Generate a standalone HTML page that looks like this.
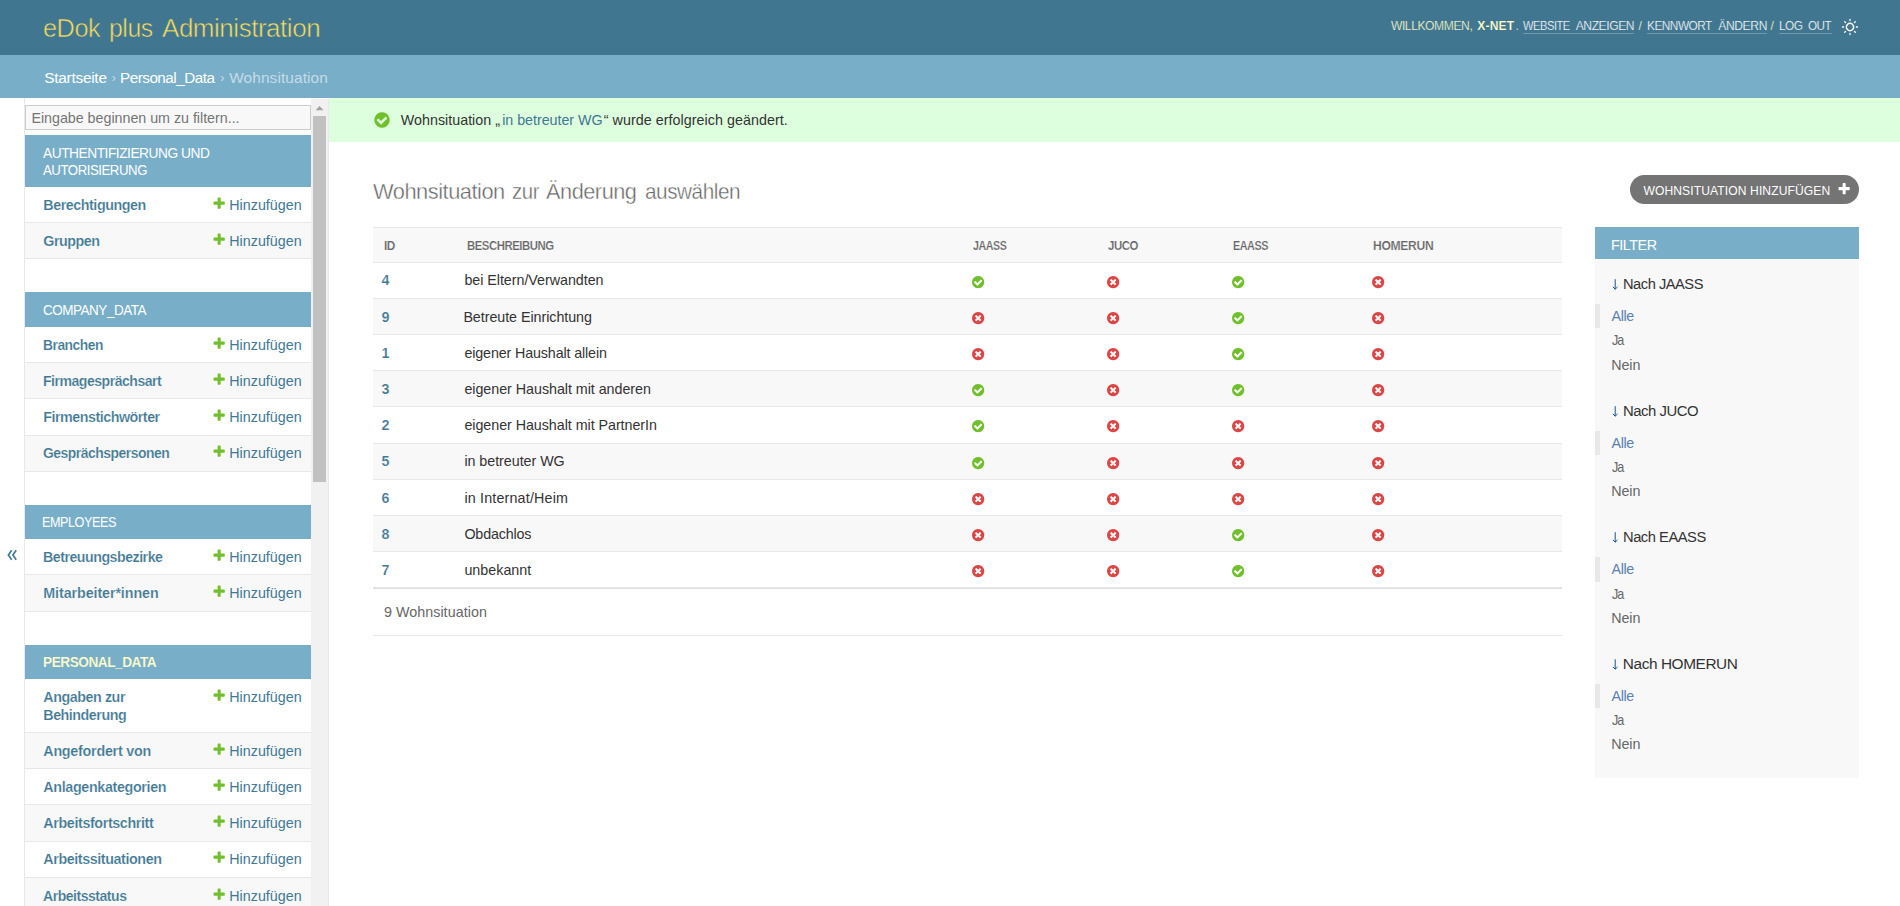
<!DOCTYPE html>
<html lang="de">
<head>
<meta charset="utf-8">
<title>Wohnsituation zur Änderung auswählen | eDok plus Administration</title>
<style>
html,body{margin:0;padding:0;background:#fff;}
body{width:1900px;height:906px;overflow:hidden;font-family:"Liberation Sans",sans-serif;}
#wrap{position:relative;width:1900px;height:906px;overflow:hidden;background:#fff;}
.r{position:absolute;}
.i{position:absolute;display:block;overflow:visible;}
.t{position:absolute;white-space:nowrap;line-height:0;transform-origin:0 50%;font-family:"Liberation Sans",sans-serif;}
.t::before{content:"";display:inline-block;width:0;height:30px;}
.title{-webkit-text-stroke:0.55px #417690;}
.h1{-webkit-text-stroke:0.4px #fff;}
.ul{-webkit-text-stroke:0.22px #417690;}
</style>
</head>
<body>
<svg width="0" height="0" style="position:absolute">
<symbol id="pg" viewBox="0 0 1792 1792"><path fill="#70bf2b" d="M1600 796v192q0 40-28 68t-68 28h-416v416q0 40-28 68t-68 28h-192q-40 0-68-28t-28-68v-416h-416q-40 0-68-28t-28-68v-192q0-40 28-68t68-28h416v-416q0-40 28-68t68-28h192q40 0 68 28t28 68v416h416q40 0 68 28t28 68z"/></symbol>
<symbol id="pw" viewBox="0 0 1792 1792"><path fill="#fff" d="M1600 736v192q0 40-28 68t-68 28h-416v416q0 40-28 68t-68 28h-192q-40 0-68-28t-28-68v-416h-416q-40 0-68-28t-28-68v-192q0-40 28-68t68-28h416v-416q0-40 28-68t68-28h192q40 0 68 28t28 68v416h416q40 0 68 28t28 68z"/></symbol>
<symbol id="yes" viewBox="0 0 1792 1792"><path fill="#70bf2b" d="M1412 734q0-28-18-46l-91-90q-19-19-45-19t-45 19l-408 407-226-226q-19-19-45-19t-45 19l-91 90q-18 18-18 46 0 27 18 45l362 362q19 19 45 19 27 0 46-19l543-543q18-18 18-45zm252 162q0 209-103 385.500t-279.500 279.500-385.500 103-385.500-103-279.500-279.500-103-385.500 103-385.500 279.500-279.500 385.500-103 385.500 103 279.500 279.500 103 385.500z"/></symbol>
<symbol id="no" viewBox="0 0 1792 1792"><path fill="#dd4646" d="M1277 1122q0-26-19-45l-181-181 181-181q19-19 19-45 0-27-19-46l-90-90q-19-19-46-19-26 0-45 19l-181 181-181-181q-19-19-45-19-27 0-46 19l-90 90q-19 19-19 46 0 26 19 45l181 181-181 181q-19 19-19 45 0 27 19 46l90 90q19 19 46 19 26 0 45-19l181-181 181 181q19 19 45 19 27 0 46-19l90-90q19-19 19-46zm387-226q0 209-103 385.500t-279.500 279.500-385.500 103-385.500-103-279.500-279.500-103-385.500 103-385.500 279.500-279.500 385.500-103 385.500 103 279.500 279.500 103 385.500z"/></symbol>
</svg>
<div id="wrap">
<div class="r" style="left:0px;top:0px;width:1900px;height:55px;background:#417690;"></div>
<div class="t title" style="left:43.35px;top:7px;font-size:26.70px;color:#f5dd5d;letter-spacing:-0.500px;transform:scaleX(0.9478);">eDok</div>
<div class="t title" style="left:109.07px;top:7px;font-size:26.70px;color:#f5dd5d;letter-spacing:-0.500px;transform:scaleX(0.9303);">plus</div>
<div class="t title" style="left:162.20px;top:7px;font-size:26.70px;color:#f5dd5d;letter-spacing:-0.500px;transform:scaleX(0.9756);">Administration</div>
<div class="t ul" style="left:1390.90px;top:0px;font-size:12.10px;color:#ffc;letter-spacing:-0.415px;">WILLKOMMEN,</div>
<div class="t" style="left:1477.20px;top:0px;font-size:12.10px;color:#ffc;letter-spacing:0.177px;font-weight:bold;-webkit-text-stroke:0.18px #417690;">X-NET</div>
<div class="t ul" style="left:1515.60px;top:0px;font-size:12.10px;color:#ffc;">.</div>
<div class="t ul" style="left:1523.00px;top:0px;font-size:12.10px;color:#fff;letter-spacing:-0.500px;transform:scaleX(0.9190);">WEBSITE</div>
<div class="t ul" style="left:1575.70px;top:0px;font-size:12.10px;color:#fff;letter-spacing:-0.427px;">ANZEIGEN</div>
<div class="t ul" style="left:1638.50px;top:0px;font-size:12.10px;color:#ffc;">/</div>
<div class="t ul" style="left:1647.10px;top:0px;font-size:12.10px;color:#fff;letter-spacing:-0.500px;transform:scaleX(0.9772);">KENNWORT</div>
<div class="t ul" style="left:1718.20px;top:0px;font-size:12.10px;color:#fff;letter-spacing:-0.367px;">ÄNDERN</div>
<div class="t ul" style="left:1770.50px;top:0px;font-size:12.10px;color:#ffc;">/</div>
<div class="t ul" style="left:1779.10px;top:0px;font-size:12.10px;color:#fff;letter-spacing:-0.500px;transform:scaleX(0.9779);">LOG</div>
<div class="t ul" style="left:1807.50px;top:0px;font-size:12.10px;color:#fff;letter-spacing:-0.500px;transform:scaleX(0.9666);">OUT</div>
<div class="r" style="left:1523px;top:33px;width:111px;height:1px;background:rgba(255,255,255,0.25);"></div>
<div class="r" style="left:1647px;top:33px;width:120px;height:1px;background:rgba(255,255,255,0.25);"></div>
<div class="r" style="left:1779px;top:33px;width:53px;height:1px;background:rgba(255,255,255,0.25);"></div>
<svg class="i" style="left:1840.8px;top:17.5px" width="18" height="18" viewBox="-9 -9 18 18" fill="none" stroke="#fff" stroke-width="1.5" stroke-linecap="round"><circle cx="0" cy="0" r="3.65"/><path stroke-width="1.3" d="M0 -6.4v-1.1M0 6.4v1.1M-6.4 0h-1.1M6.4 0h1.1M4.5 -4.5l.8 -.8M-4.5 -4.5l-.8 -.8M4.5 4.5l.8 .8M-4.5 4.5l-.8 .8"/></svg>
<div class="r" style="left:0px;top:55px;width:1900px;height:43px;background:#79aec8;"></div>
<div class="t" style="left:44.20px;top:53px;font-size:15.40px;color:#fff;letter-spacing:-0.250px;">Startseite</div>
<div class="t" style="left:111.70px;top:52px;font-size:12.32px;color:#c4dce8;">›</div>
<div class="t" style="left:119.91px;top:53px;font-size:15.40px;color:#fff;letter-spacing:-0.500px;transform:scaleX(0.9910);">Personal_Data</div>
<div class="t" style="left:220.30px;top:52px;font-size:12.32px;color:#c4dce8;">›</div>
<div class="t" style="left:229.20px;top:53px;font-size:15.40px;color:#c4dce8;letter-spacing:0.117px;">Wohnsituation</div>
<div class="r" style="left:24px;top:98px;width:1px;height:808px;background:#e8e8e8;"></div>
<svg class="i" style="left:6px;top:548px" width="13" height="14" viewBox="6 548 13 14" fill="none" stroke="#417893" stroke-width="1.7"><path d="M11.7 550.2L8.4 555l3.3 4.8M16.2 550.2L12.9 555l3.3 4.8"/></svg>
<div class="r" style="left:311px;top:99px;width:17px;height:807px;background:#f1f1f1;"></div>
<div class="r" style="left:328px;top:99px;width:1px;height:807px;background:#e8e8e8;"></div>
<div class="r" style="left:313px;top:116px;width:13px;height:366px;background:#c1c1c1;"></div>
<svg class="i" style="left:315px;top:105px" width="9" height="6" viewBox="0 0 9 6"><path d="M0.5 5.3L4.5 1l4 4.3z" fill="#a3a3a3"/></svg>
<div class="r" style="left:25px;top:105px;width:286px;height:25px;background:#f8f8f8;box-sizing:border-box;border:1px solid #ccc;"></div>
<div class="t" style="left:31.40px;top:93px;font-size:14.30px;color:#757575;letter-spacing:-0.027px;">Eingabe beginnen um zu filtern...</div>
<div class="r" style="left:25px;top:135px;width:286px;height:52px;background:#79aec8;"></div>
<div class="t" style="left:43.20px;top:128px;font-size:14.30px;color:#fff;letter-spacing:-0.500px;transform:scaleX(0.9616);">AUTHENTIFIZIERUNG UND</div>
<div class="t" style="left:43.20px;top:145px;font-size:14.30px;color:#fff;letter-spacing:-0.500px;transform:scaleX(0.9249);">AUTORISIERUNG</div>
<div class="r" style="left:25px;top:187px;width:286px;height:35px;background:#fff;"></div>
<div class="r" style="left:25px;top:222px;width:286px;height:1px;background:#e8e8e8;"></div>
<div class="t" style="left:43.30px;top:180px;font-size:14.30px;color:#417893;letter-spacing:-0.453px;font-weight:bold;-webkit-text-stroke:0.18px #fff;">Berechtigungen</div>
<svg class="i" style="left:211.85px;top:195.90px" width="14.30" height="14.30"><use href="#pg"/></svg>
<div class="t" style="left:229.20px;top:180px;font-size:14.30px;color:#417893;letter-spacing:0.025px;">Hinzufügen</div>
<div class="r" style="left:25px;top:223px;width:286px;height:35px;background:#f8f8f8;"></div>
<div class="r" style="left:25px;top:258px;width:286px;height:1px;background:#e8e8e8;"></div>
<div class="t" style="left:43.30px;top:216px;font-size:14.30px;color:#417893;letter-spacing:-0.500px;font-weight:bold;-webkit-text-stroke:0.18px #f8f8f8;">Gruppen</div>
<svg class="i" style="left:211.85px;top:231.90px" width="14.30" height="14.30"><use href="#pg"/></svg>
<div class="t" style="left:229.20px;top:216px;font-size:14.30px;color:#417893;letter-spacing:0.025px;">Hinzufügen</div>
<div class="r" style="left:25px;top:292px;width:286px;height:35px;background:#79aec8;"></div>
<div class="t" style="left:43.20px;top:285px;font-size:14.30px;color:#fff;letter-spacing:-0.500px;transform:scaleX(0.9433);">COMPANY_DATA</div>
<div class="r" style="left:25px;top:327px;width:286px;height:35px;background:#fff;"></div>
<div class="r" style="left:25px;top:362px;width:286px;height:1px;background:#e8e8e8;"></div>
<div class="t" style="left:43.30px;top:320px;font-size:14.30px;color:#417893;letter-spacing:-0.500px;font-weight:bold;-webkit-text-stroke:0.18px #fff;transform:scaleX(0.9675);">Branchen</div>
<svg class="i" style="left:211.85px;top:335.90px" width="14.30" height="14.30"><use href="#pg"/></svg>
<div class="t" style="left:229.20px;top:320px;font-size:14.30px;color:#417893;letter-spacing:0.025px;">Hinzufügen</div>
<div class="r" style="left:25px;top:363px;width:286px;height:35px;background:#f8f8f8;"></div>
<div class="r" style="left:25px;top:398px;width:286px;height:1px;background:#e8e8e8;"></div>
<div class="t" style="left:43.30px;top:356px;font-size:14.30px;color:#417893;letter-spacing:-0.500px;font-weight:bold;-webkit-text-stroke:0.18px #f8f8f8;transform:scaleX(0.9837);">Firmagesprächsart</div>
<svg class="i" style="left:211.85px;top:371.90px" width="14.30" height="14.30"><use href="#pg"/></svg>
<div class="t" style="left:229.20px;top:356px;font-size:14.30px;color:#417893;letter-spacing:0.025px;">Hinzufügen</div>
<div class="r" style="left:25px;top:399px;width:286px;height:36px;background:#fff;"></div>
<div class="r" style="left:25px;top:435px;width:286px;height:1px;background:#e8e8e8;"></div>
<div class="t" style="left:43.30px;top:392px;font-size:14.30px;color:#417893;letter-spacing:-0.492px;font-weight:bold;-webkit-text-stroke:0.18px #fff;">Firmenstichwörter</div>
<svg class="i" style="left:211.85px;top:407.90px" width="14.30" height="14.30"><use href="#pg"/></svg>
<div class="t" style="left:229.20px;top:392px;font-size:14.30px;color:#417893;letter-spacing:0.025px;">Hinzufügen</div>
<div class="r" style="left:25px;top:436px;width:286px;height:35px;background:#f8f8f8;"></div>
<div class="r" style="left:25px;top:471px;width:286px;height:1px;background:#e8e8e8;"></div>
<div class="t" style="left:43.30px;top:428px;font-size:14.30px;color:#417893;letter-spacing:-0.500px;font-weight:bold;-webkit-text-stroke:0.18px #f8f8f8;transform:scaleX(0.9736);">Gesprächspersonen</div>
<svg class="i" style="left:211.85px;top:443.90px" width="14.30" height="14.30"><use href="#pg"/></svg>
<div class="t" style="left:229.20px;top:428px;font-size:14.30px;color:#417893;letter-spacing:0.025px;">Hinzufügen</div>
<div class="r" style="left:25px;top:505px;width:286px;height:34px;background:#79aec8;"></div>
<div class="t" style="left:42.32px;top:497px;font-size:14.30px;color:#fff;letter-spacing:-0.500px;transform:scaleX(0.8831);">EMPLOYEES</div>
<div class="r" style="left:25px;top:539px;width:286px;height:35px;background:#fff;"></div>
<div class="r" style="left:25px;top:574px;width:286px;height:1px;background:#e8e8e8;"></div>
<div class="t" style="left:43.30px;top:532px;font-size:14.30px;color:#417893;letter-spacing:-0.500px;font-weight:bold;-webkit-text-stroke:0.18px #fff;transform:scaleX(0.9937);">Betreuungsbezirke</div>
<svg class="i" style="left:211.85px;top:547.90px" width="14.30" height="14.30"><use href="#pg"/></svg>
<div class="t" style="left:229.20px;top:532px;font-size:14.30px;color:#417893;letter-spacing:0.025px;">Hinzufügen</div>
<div class="r" style="left:25px;top:575px;width:286px;height:36px;background:#f8f8f8;"></div>
<div class="r" style="left:25px;top:611px;width:286px;height:1px;background:#e8e8e8;"></div>
<div class="t" style="left:43.30px;top:568px;font-size:14.30px;color:#417893;letter-spacing:-0.090px;font-weight:bold;-webkit-text-stroke:0.18px #f8f8f8;">Mitarbeiter*innen</div>
<svg class="i" style="left:211.85px;top:583.90px" width="14.30" height="14.30"><use href="#pg"/></svg>
<div class="t" style="left:229.20px;top:568px;font-size:14.30px;color:#417893;letter-spacing:0.025px;">Hinzufügen</div>
<div class="r" style="left:25px;top:645px;width:286px;height:34px;background:#79aec8;"></div>
<div class="t" style="left:43.20px;top:637px;font-size:14.30px;color:#ffc;letter-spacing:-0.500px;font-weight:bold;-webkit-text-stroke:0.18px #79aec8;transform:scaleX(0.9549);">PERSONAL_DATA</div>
<div class="r" style="left:25px;top:679px;width:286px;height:53px;background:#fff;"></div>
<div class="r" style="left:25px;top:732px;width:286px;height:1px;background:#e8e8e8;"></div>
<div class="t" style="left:43.30px;top:672px;font-size:14.30px;color:#417893;letter-spacing:-0.441px;font-weight:bold;-webkit-text-stroke:0.18px #fff;">Angaben zur</div>
<div class="t" style="left:43.30px;top:690px;font-size:14.30px;color:#417893;letter-spacing:-0.483px;font-weight:bold;-webkit-text-stroke:0.18px #fff;">Behinderung</div>
<svg class="i" style="left:211.85px;top:687.90px" width="14.30" height="14.30"><use href="#pg"/></svg>
<div class="t" style="left:229.20px;top:672px;font-size:14.30px;color:#417893;letter-spacing:0.025px;">Hinzufügen</div>
<div class="r" style="left:25px;top:733px;width:286px;height:35px;background:#f8f8f8;"></div>
<div class="r" style="left:25px;top:768px;width:286px;height:1px;background:#e8e8e8;"></div>
<div class="t" style="left:43.30px;top:726px;font-size:14.30px;color:#417893;letter-spacing:-0.240px;font-weight:bold;-webkit-text-stroke:0.18px #f8f8f8;">Angefordert von</div>
<svg class="i" style="left:211.85px;top:741.90px" width="14.30" height="14.30"><use href="#pg"/></svg>
<div class="t" style="left:229.20px;top:726px;font-size:14.30px;color:#417893;letter-spacing:0.025px;">Hinzufügen</div>
<div class="r" style="left:25px;top:769px;width:286px;height:35px;background:#fff;"></div>
<div class="r" style="left:25px;top:804px;width:286px;height:1px;background:#e8e8e8;"></div>
<div class="t" style="left:43.30px;top:762px;font-size:14.30px;color:#417893;letter-spacing:-0.342px;font-weight:bold;-webkit-text-stroke:0.18px #fff;">Anlagenkategorien</div>
<svg class="i" style="left:211.85px;top:777.90px" width="14.30" height="14.30"><use href="#pg"/></svg>
<div class="t" style="left:229.20px;top:762px;font-size:14.30px;color:#417893;letter-spacing:0.025px;">Hinzufügen</div>
<div class="r" style="left:25px;top:805px;width:286px;height:36px;background:#f8f8f8;"></div>
<div class="r" style="left:25px;top:841px;width:286px;height:1px;background:#e8e8e8;"></div>
<div class="t" style="left:43.30px;top:798px;font-size:14.30px;color:#417893;letter-spacing:-0.371px;font-weight:bold;-webkit-text-stroke:0.18px #f8f8f8;">Arbeitsfortschritt</div>
<svg class="i" style="left:211.85px;top:813.90px" width="14.30" height="14.30"><use href="#pg"/></svg>
<div class="t" style="left:229.20px;top:798px;font-size:14.30px;color:#417893;letter-spacing:0.025px;">Hinzufügen</div>
<div class="r" style="left:25px;top:842px;width:286px;height:35px;background:#fff;"></div>
<div class="r" style="left:25px;top:877px;width:286px;height:1px;background:#e8e8e8;"></div>
<div class="t" style="left:43.30px;top:834px;font-size:14.30px;color:#417893;letter-spacing:-0.405px;font-weight:bold;-webkit-text-stroke:0.18px #fff;">Arbeitssituationen</div>
<svg class="i" style="left:211.85px;top:849.90px" width="14.30" height="14.30"><use href="#pg"/></svg>
<div class="t" style="left:229.20px;top:834px;font-size:14.30px;color:#417893;letter-spacing:0.025px;">Hinzufügen</div>
<div class="r" style="left:25px;top:878px;width:286px;height:35px;background:#f8f8f8;"></div>
<div class="r" style="left:25px;top:913px;width:286px;height:1px;background:#e8e8e8;"></div>
<div class="t" style="left:43.30px;top:871px;font-size:14.30px;color:#417893;letter-spacing:-0.500px;font-weight:bold;-webkit-text-stroke:0.18px #f8f8f8;transform:scaleX(0.9834);">Arbeitsstatus</div>
<svg class="i" style="left:211.85px;top:886.90px" width="14.30" height="14.30"><use href="#pg"/></svg>
<div class="t" style="left:229.20px;top:871px;font-size:14.30px;color:#417893;letter-spacing:0.025px;">Hinzufügen</div>
<div class="r" style="left:329px;top:98px;width:1571px;height:44px;background:#dfd;"></div>
<svg class="i" style="left:373.00px;top:111.00px" width="18.00" height="18.00"><use href="#yes"/></svg>
<div class="t" style="left:400.85px;top:95px;font-size:14.30px;color:#333;">Wohnsituation „</div>
<div class="t" style="left:502.20px;top:95px;font-size:14.30px;color:#417893;letter-spacing:-0.042px;">in betreuter WG</div>
<div class="t" style="left:603.80px;top:95px;font-size:14.30px;color:#333;letter-spacing:0.043px;">“ wurde erfolgreich geändert.</div>
<div class="t h1" style="left:373.10px;top:169px;font-size:22.80px;color:#666;letter-spacing:-0.500px;transform:scaleX(0.9580);">Wohnsituation</div>
<div class="t h1" style="left:511.70px;top:169px;font-size:22.80px;color:#666;letter-spacing:-0.500px;transform:scaleX(0.8946);">zur</div>
<div class="t h1" style="left:546.40px;top:169px;font-size:22.80px;color:#666;letter-spacing:-0.500px;transform:scaleX(0.9536);">Änderung</div>
<div class="t h1" style="left:644.90px;top:169px;font-size:22.80px;color:#666;letter-spacing:-0.500px;transform:scaleX(0.9097);">auswählen</div>
<div class="r" style="left:1630px;top:175px;width:229px;height:29px;background:#747474;border-radius:14.5px;"></div>
<div class="t" style="left:1643.40px;top:165px;font-size:12.10px;color:#fff;letter-spacing:0.100px;">WOHNSITUATION HINZUFÜGEN</div>
<svg class="i" style="left:1836.85px;top:182.15px" width="14.30" height="14.30"><use href="#pw"/></svg>
<div class="r" style="left:373px;top:227px;width:1189px;height:1px;background:#e8e8e8;"></div>
<div class="r" style="left:373px;top:228px;width:1189px;height:34px;background:#f8f8f8;"></div>
<div class="r" style="left:373px;top:262px;width:1189px;height:1px;background:#e8e8e8;"></div>
<div class="t" style="left:384.30px;top:220px;font-size:12.10px;color:#666;letter-spacing:-0.500px;font-weight:bold;-webkit-text-stroke:0.18px #f8f8f8;transform:scaleX(0.9781);">ID</div>
<div class="t" style="left:466.80px;top:220px;font-size:12.10px;color:#666;letter-spacing:-0.500px;font-weight:bold;-webkit-text-stroke:0.18px #f8f8f8;transform:scaleX(0.9404);">BESCHREIBUNG</div>
<div class="t" style="left:973.00px;top:220px;font-size:12.10px;color:#666;letter-spacing:-0.500px;font-weight:bold;-webkit-text-stroke:0.18px #f8f8f8;transform:scaleX(0.8808);">JAASS</div>
<div class="t" style="left:1107.70px;top:220px;font-size:12.10px;color:#666;letter-spacing:-0.500px;font-weight:bold;-webkit-text-stroke:0.18px #f8f8f8;transform:scaleX(0.9466);">JUCO</div>
<div class="t" style="left:1233.30px;top:220px;font-size:12.10px;color:#666;letter-spacing:-0.500px;font-weight:bold;-webkit-text-stroke:0.18px #f8f8f8;transform:scaleX(0.8939);">EAASS</div>
<div class="t" style="left:1373.00px;top:220px;font-size:12.10px;color:#666;letter-spacing:-0.291px;font-weight:bold;-webkit-text-stroke:0.18px #f8f8f8;">HOMERUN</div>
<div class="r" style="left:373px;top:298px;width:1189px;height:1px;background:#e8e8e8;"></div>
<div class="t" style="left:381.60px;top:255px;font-size:14.30px;color:#417893;font-weight:bold;-webkit-text-stroke:0.18px #fff;">4</div>
<div class="t" style="left:464.40px;top:255px;font-size:14.30px;color:#333;letter-spacing:-0.037px;">bei Eltern/Verwandten</div>
<svg class="i" style="left:970.85px;top:274.85px" width="14.30" height="14.30"><use href="#yes"/></svg>
<svg class="i" style="left:1105.85px;top:274.85px" width="14.30" height="14.30"><use href="#no"/></svg>
<svg class="i" style="left:1231.00px;top:274.85px" width="14.30" height="14.30"><use href="#yes"/></svg>
<svg class="i" style="left:1370.70px;top:274.85px" width="14.30" height="14.30"><use href="#no"/></svg>
<div class="r" style="left:373px;top:299px;width:1189px;height:35px;background:#f8f8f8;"></div>
<div class="r" style="left:373px;top:334px;width:1189px;height:1px;background:#e8e8e8;"></div>
<div class="t" style="left:381.60px;top:292px;font-size:14.30px;color:#417893;font-weight:bold;-webkit-text-stroke:0.18px #f8f8f8;">9</div>
<div class="t" style="left:463.40px;top:292px;font-size:14.30px;color:#333;letter-spacing:-0.052px;">Betreute Einrichtung</div>
<svg class="i" style="left:970.85px;top:310.85px" width="14.30" height="14.30"><use href="#no"/></svg>
<svg class="i" style="left:1105.85px;top:310.85px" width="14.30" height="14.30"><use href="#no"/></svg>
<svg class="i" style="left:1231.00px;top:310.85px" width="14.30" height="14.30"><use href="#yes"/></svg>
<svg class="i" style="left:1370.70px;top:310.85px" width="14.30" height="14.30"><use href="#no"/></svg>
<div class="r" style="left:373px;top:370px;width:1189px;height:1px;background:#e8e8e8;"></div>
<div class="t" style="left:381.60px;top:328px;font-size:14.30px;color:#417893;font-weight:bold;-webkit-text-stroke:0.18px #fff;">1</div>
<div class="t" style="left:464.40px;top:328px;font-size:14.30px;color:#333;letter-spacing:-0.132px;">eigener Haushalt allein</div>
<svg class="i" style="left:970.85px;top:346.85px" width="14.30" height="14.30"><use href="#no"/></svg>
<svg class="i" style="left:1105.85px;top:346.85px" width="14.30" height="14.30"><use href="#no"/></svg>
<svg class="i" style="left:1231.00px;top:346.85px" width="14.30" height="14.30"><use href="#yes"/></svg>
<svg class="i" style="left:1370.70px;top:346.85px" width="14.30" height="14.30"><use href="#no"/></svg>
<div class="r" style="left:373px;top:371px;width:1189px;height:35px;background:#f8f8f8;"></div>
<div class="r" style="left:373px;top:406px;width:1189px;height:1px;background:#e8e8e8;"></div>
<div class="t" style="left:381.60px;top:364px;font-size:14.30px;color:#417893;font-weight:bold;-webkit-text-stroke:0.18px #f8f8f8;">3</div>
<div class="t" style="left:464.40px;top:364px;font-size:14.30px;color:#333;letter-spacing:-0.037px;">eigener Haushalt mit anderen</div>
<svg class="i" style="left:970.85px;top:383.25px" width="14.30" height="14.30"><use href="#yes"/></svg>
<svg class="i" style="left:1105.85px;top:383.25px" width="14.30" height="14.30"><use href="#no"/></svg>
<svg class="i" style="left:1231.00px;top:383.25px" width="14.30" height="14.30"><use href="#yes"/></svg>
<svg class="i" style="left:1370.70px;top:383.25px" width="14.30" height="14.30"><use href="#no"/></svg>
<div class="r" style="left:373px;top:443px;width:1189px;height:1px;background:#e8e8e8;"></div>
<div class="t" style="left:381.60px;top:400px;font-size:14.30px;color:#417893;font-weight:bold;-webkit-text-stroke:0.18px #fff;">2</div>
<div class="t" style="left:464.40px;top:400px;font-size:14.30px;color:#333;letter-spacing:-0.047px;">eigener Haushalt mit PartnerIn</div>
<svg class="i" style="left:970.85px;top:419.25px" width="14.30" height="14.30"><use href="#yes"/></svg>
<svg class="i" style="left:1105.85px;top:419.25px" width="14.30" height="14.30"><use href="#no"/></svg>
<svg class="i" style="left:1231.00px;top:419.25px" width="14.30" height="14.30"><use href="#no"/></svg>
<svg class="i" style="left:1370.70px;top:419.25px" width="14.30" height="14.30"><use href="#no"/></svg>
<div class="r" style="left:373px;top:444px;width:1189px;height:35px;background:#f8f8f8;"></div>
<div class="r" style="left:373px;top:479px;width:1189px;height:1px;background:#e8e8e8;"></div>
<div class="t" style="left:381.60px;top:436px;font-size:14.30px;color:#417893;font-weight:bold;-webkit-text-stroke:0.18px #f8f8f8;">5</div>
<div class="t" style="left:464.40px;top:436px;font-size:14.30px;color:#333;letter-spacing:-0.042px;">in betreuter WG</div>
<svg class="i" style="left:970.85px;top:455.65px" width="14.30" height="14.30"><use href="#yes"/></svg>
<svg class="i" style="left:1105.85px;top:455.65px" width="14.30" height="14.30"><use href="#no"/></svg>
<svg class="i" style="left:1231.00px;top:455.65px" width="14.30" height="14.30"><use href="#no"/></svg>
<svg class="i" style="left:1370.70px;top:455.65px" width="14.30" height="14.30"><use href="#no"/></svg>
<div class="r" style="left:373px;top:515px;width:1189px;height:1px;background:#e8e8e8;"></div>
<div class="t" style="left:381.60px;top:473px;font-size:14.30px;color:#417893;font-weight:bold;-webkit-text-stroke:0.18px #fff;">6</div>
<div class="t" style="left:464.40px;top:473px;font-size:14.30px;color:#333;letter-spacing:0.173px;">in Internat/Heim</div>
<svg class="i" style="left:970.85px;top:491.65px" width="14.30" height="14.30"><use href="#no"/></svg>
<svg class="i" style="left:1105.85px;top:491.65px" width="14.30" height="14.30"><use href="#no"/></svg>
<svg class="i" style="left:1231.00px;top:491.65px" width="14.30" height="14.30"><use href="#no"/></svg>
<svg class="i" style="left:1370.70px;top:491.65px" width="14.30" height="14.30"><use href="#no"/></svg>
<div class="r" style="left:373px;top:516px;width:1189px;height:35px;background:#f8f8f8;"></div>
<div class="r" style="left:373px;top:551px;width:1189px;height:1px;background:#e8e8e8;"></div>
<div class="t" style="left:381.60px;top:509px;font-size:14.30px;color:#417893;font-weight:bold;-webkit-text-stroke:0.18px #f8f8f8;">8</div>
<div class="t" style="left:464.40px;top:509px;font-size:14.30px;color:#333;letter-spacing:-0.163px;">Obdachlos</div>
<svg class="i" style="left:970.85px;top:527.85px" width="14.30" height="14.30"><use href="#no"/></svg>
<svg class="i" style="left:1105.85px;top:527.85px" width="14.30" height="14.30"><use href="#no"/></svg>
<svg class="i" style="left:1231.00px;top:527.85px" width="14.30" height="14.30"><use href="#yes"/></svg>
<svg class="i" style="left:1370.70px;top:527.85px" width="14.30" height="14.30"><use href="#no"/></svg>
<div class="r" style="left:373px;top:587px;width:1189px;height:1px;background:#e8e8e8;"></div>
<div class="t" style="left:381.60px;top:545px;font-size:14.30px;color:#417893;font-weight:bold;-webkit-text-stroke:0.18px #fff;">7</div>
<div class="t" style="left:464.40px;top:545px;font-size:14.30px;color:#333;letter-spacing:0.012px;">unbekannt</div>
<svg class="i" style="left:970.85px;top:563.85px" width="14.30" height="14.30"><use href="#no"/></svg>
<svg class="i" style="left:1105.85px;top:563.85px" width="14.30" height="14.30"><use href="#no"/></svg>
<svg class="i" style="left:1231.00px;top:563.85px" width="14.30" height="14.30"><use href="#yes"/></svg>
<svg class="i" style="left:1370.70px;top:563.85px" width="14.30" height="14.30"><use href="#no"/></svg>
<div class="r" style="left:373px;top:588px;width:1189px;height:1px;background:#ddd;"></div>
<div class="t" style="left:383.90px;top:587px;font-size:14.30px;color:#666;letter-spacing:0.049px;">9 Wohnsituation</div>
<div class="r" style="left:373px;top:635px;width:1189px;height:1px;background:#e8e8e8;"></div>
<div class="r" style="left:1595px;top:227px;width:264px;height:32px;background:#79aec8;"></div>
<div class="r" style="left:1595px;top:259px;width:264px;height:519px;background:#f8f8f8;"></div>
<div class="t" style="left:1611.07px;top:220px;font-size:15.40px;color:#fff;letter-spacing:-0.500px;transform:scaleX(0.9324);">FILTER</div>
<svg class="i" style="left:1611px;top:278px" width="9" height="13" viewBox="0 0 9 13" fill="none" stroke="#0b4a85" stroke-width="0.95"><path d="M4.2 1.2v9.9M1.9 8.9l2.3 2.3 2.3-2.3"/></svg>
<div class="t" style="left:1622.85px;top:259px;font-size:15.40px;color:#333;letter-spacing:-0.500px;transform:scaleX(0.9520);">Nach JAASS</div>
<div class="r" style="left:1595px;top:304px;width:5px;height:24px;background:#e8e8e8;"></div>
<div class="t" style="left:1611.50px;top:291px;font-size:14.30px;color:#5b80b2;letter-spacing:-0.396px;">Alle</div>
<div class="t" style="left:1612.00px;top:315px;font-size:14.30px;color:#666;letter-spacing:-1.200px;transform:scaleX(0.8800);">Ja</div>
<div class="t" style="left:1611.30px;top:340px;font-size:14.30px;color:#666;letter-spacing:-0.117px;">Nein</div>
<svg class="i" style="left:1611px;top:405px" width="9" height="13" viewBox="0 0 9 13" fill="none" stroke="#0b4a85" stroke-width="0.95"><path d="M4.2 1.2v9.9M1.9 8.9l2.3 2.3 2.3-2.3"/></svg>
<div class="t" style="left:1622.83px;top:386px;font-size:15.40px;color:#333;letter-spacing:-0.500px;transform:scaleX(0.9672);">Nach JUCO</div>
<div class="r" style="left:1595px;top:431px;width:5px;height:24px;background:#e8e8e8;"></div>
<div class="t" style="left:1611.50px;top:418px;font-size:14.30px;color:#5b80b2;letter-spacing:-0.396px;">Alle</div>
<div class="t" style="left:1612.00px;top:442px;font-size:14.30px;color:#666;letter-spacing:-1.200px;transform:scaleX(0.8800);">Ja</div>
<div class="t" style="left:1611.30px;top:466px;font-size:14.30px;color:#666;letter-spacing:-0.117px;">Nein</div>
<svg class="i" style="left:1611px;top:531px" width="9" height="13" viewBox="0 0 9 13" fill="none" stroke="#0b4a85" stroke-width="0.95"><path d="M4.2 1.2v9.9M1.9 8.9l2.3 2.3 2.3-2.3"/></svg>
<div class="t" style="left:1622.84px;top:512px;font-size:15.40px;color:#333;letter-spacing:-0.500px;transform:scaleX(0.9561);">Nach EAASS</div>
<div class="r" style="left:1595px;top:557px;width:5px;height:25px;background:#e8e8e8;"></div>
<div class="t" style="left:1611.50px;top:544px;font-size:14.30px;color:#5b80b2;letter-spacing:-0.396px;">Alle</div>
<div class="t" style="left:1612.00px;top:569px;font-size:14.30px;color:#666;letter-spacing:-1.200px;transform:scaleX(0.8800);">Ja</div>
<div class="t" style="left:1611.30px;top:593px;font-size:14.30px;color:#666;letter-spacing:-0.117px;">Nein</div>
<svg class="i" style="left:1611px;top:658px" width="9" height="13" viewBox="0 0 9 13" fill="none" stroke="#0b4a85" stroke-width="0.95"><path d="M4.2 1.2v9.9M1.9 8.9l2.3 2.3 2.3-2.3"/></svg>
<div class="t" style="left:1622.80px;top:639px;font-size:15.40px;color:#333;letter-spacing:-0.419px;">Nach HOMERUN</div>
<div class="r" style="left:1595px;top:684px;width:5px;height:24px;background:#e8e8e8;"></div>
<div class="t" style="left:1611.50px;top:671px;font-size:14.30px;color:#5b80b2;letter-spacing:-0.396px;">Alle</div>
<div class="t" style="left:1612.00px;top:695px;font-size:14.30px;color:#666;letter-spacing:-1.200px;transform:scaleX(0.8800);">Ja</div>
<div class="t" style="left:1611.30px;top:719px;font-size:14.30px;color:#666;letter-spacing:-0.117px;">Nein</div>
</div>
</body>
</html>
